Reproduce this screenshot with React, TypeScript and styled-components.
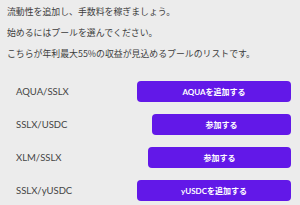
import React from "react";
import styled, { createGlobalStyle } from "styled-components";

const GlobalStyle = createGlobalStyle`
    body {
        margin: 0;
        background: #ececec;
        font-family: Lato, "Noto Sans CJK JP", sans-serif;
    }
`;

const Container = styled.div`
    width: 300px;
    height: 205px;
    box-sizing: border-box;
    padding: 1px 9px 0 7px;
    color: #3d3d3d;
`;

const Intro = styled.p`
    margin: 0;
    font-family: "Noto Sans CJK JP", sans-serif;
    font-size: 8.9px;
    line-height: 21px;
    white-space: nowrap;
`;

const PoolList = styled.div`
    display: flex;
    flex-direction: column;
    gap: 12px;
    margin-top: 17px;
`;

const PoolRow = styled.div`
    display: flex;
    flex-direction: row;
    align-items: center;
    justify-content: space-between;
    height: 21px;
`;

const PoolName = styled.div`
    padding-left: 9px;
    font-family: Lato, "Noto Sans CJK JP", sans-serif;
    font-size: 9.5px;
    color: #444444;
`;

const ActionButton = styled.button<{ $width: number }>`
    width: ${p => p.$width}px;
    height: 21px;
    border: none;
    border-radius: 4px;
    background: #6218e8;
    color: #ffffff;
    font-family: Lato, "Noto Sans CJK JP", sans-serif;
    font-size: 8px;
    font-weight: 700;
    padding: 0;
    cursor: pointer;
`;

interface Pool {
    name: string;
    label: string;
    width: number;
}

const pools: Pool[] = [
    { name: "AQUA/SSLX", label: "AQUAを追加する", width: 154 },
    { name: "SSLX/USDC", label: "参加する", width: 139 },
    { name: "XLM/SSLX", label: "参加する", width: 143 },
    { name: "SSLX/yUSDC", label: "yUSDCを追加する", width: 154 },
];

export default function App() {
    return (
        <>
            <GlobalStyle />
            <Container>
                <Intro>流動性を追加し、手数料を稼ぎましょう。</Intro>
                <Intro>始めるにはプールを選んでください。</Intro>
                <Intro>こちらが年利最大55%の収益が見込めるプールのリストです。</Intro>
                <PoolList>
                    {pools.map(pool => (
                        <PoolRow key={pool.name}>
                            <PoolName>{pool.name}</PoolName>
                            <ActionButton $width={pool.width}>{pool.label}</ActionButton>
                        </PoolRow>
                    ))}
                </PoolList>
            </Container>
        </>
    );
}
